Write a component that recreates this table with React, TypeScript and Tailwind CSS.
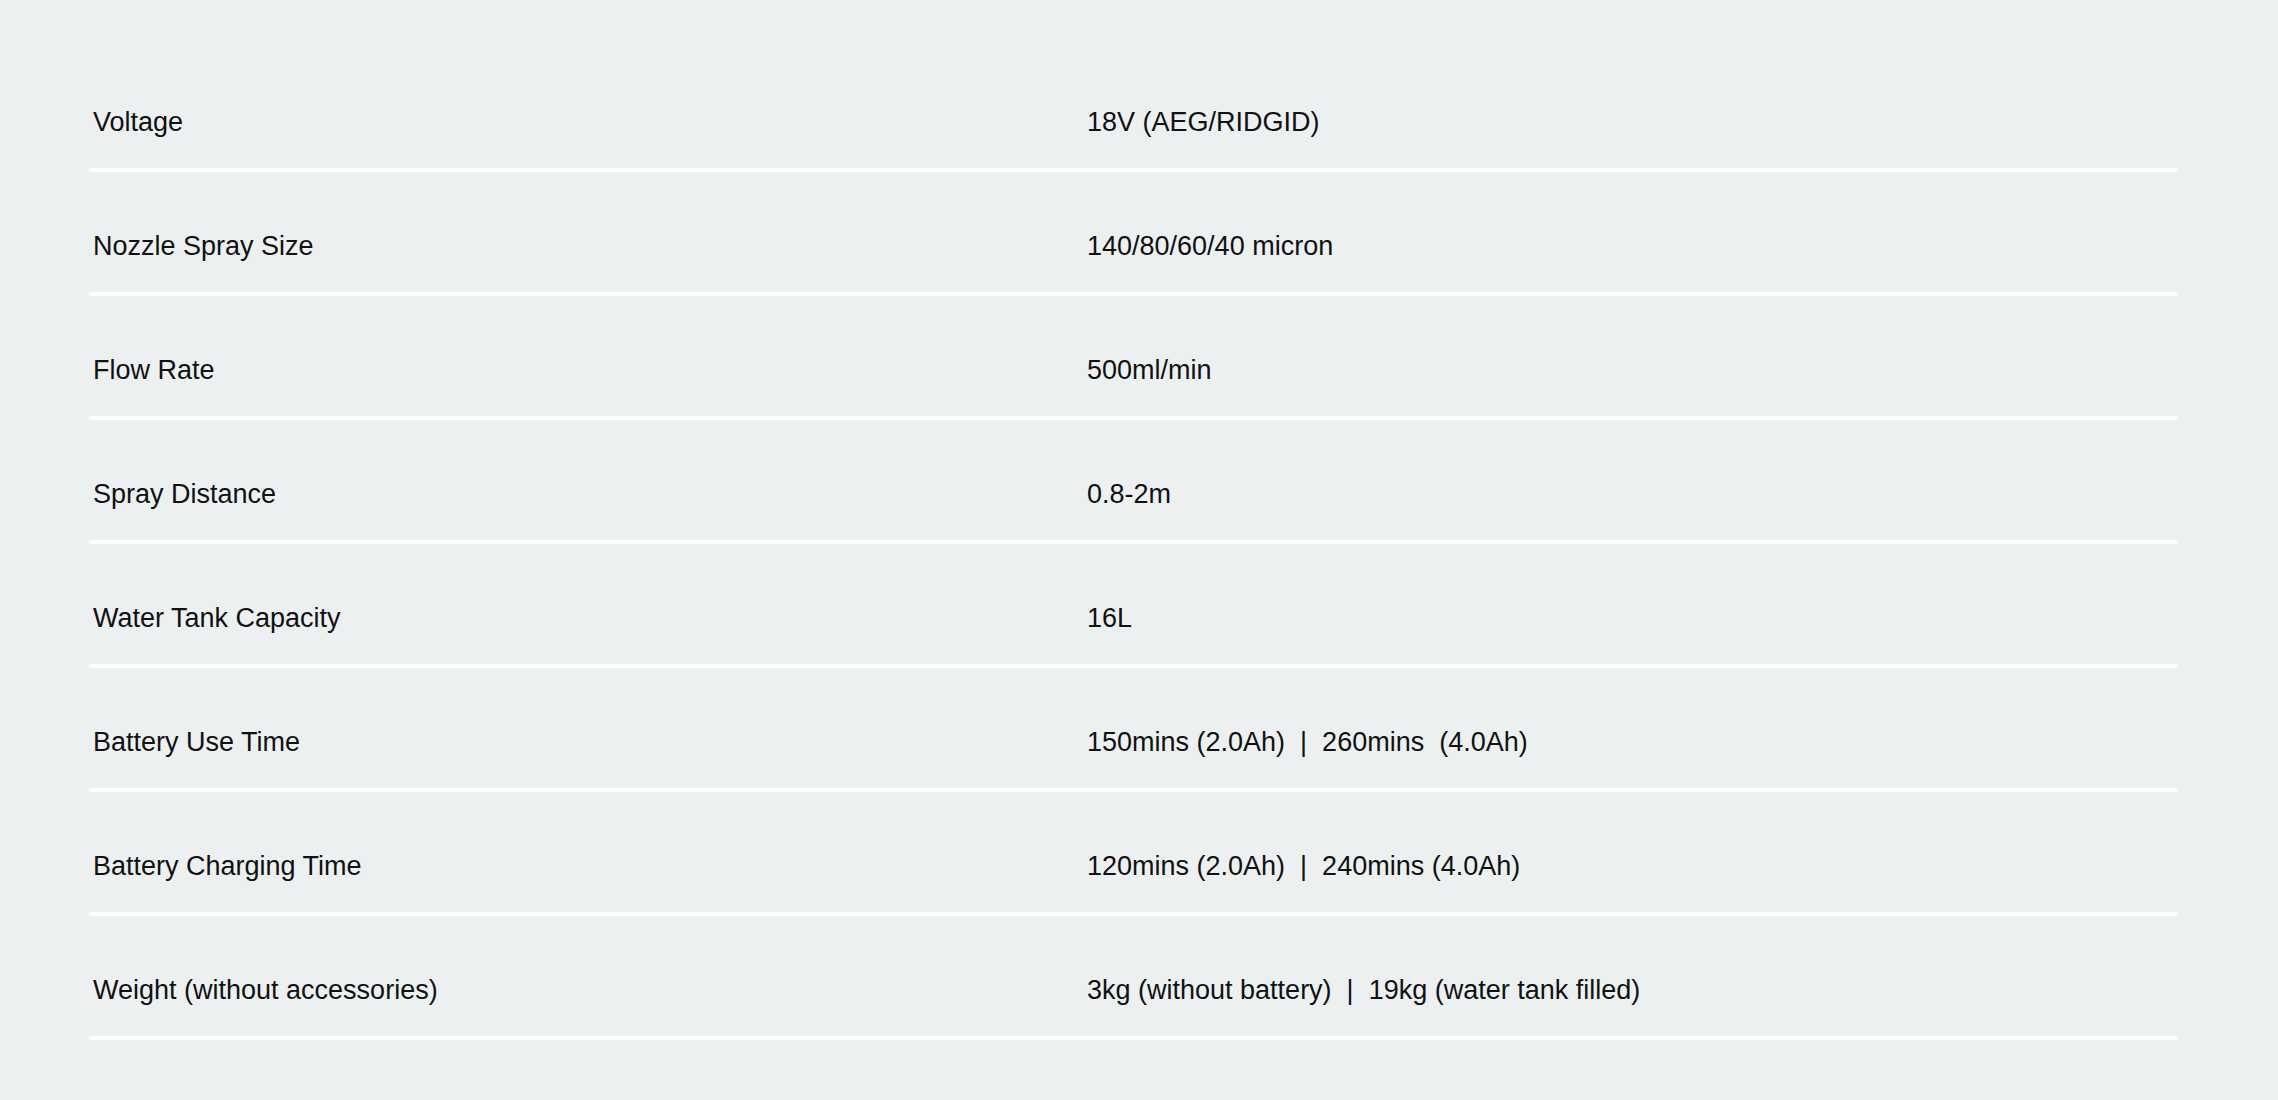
import React from "react";

const rows: [string, string][] = [
  ["Voltage", "18V (AEG/RIDGID)"],
  ["Nozzle Spray Size", "140/80/60/40 micron"],
  ["Flow Rate", "500ml/min"],
  ["Spray Distance", "0.8-2m"],
  ["Water Tank Capacity", "16L"],
  ["Battery Use Time", "150mins (2.0Ah)  |  260mins  (4.0Ah)"],
  ["Battery Charging Time", "120mins (2.0Ah)  |  240mins (4.0Ah)"],
  ["Weight (without accessories)", "3kg (without battery)  |  19kg (water tank filled)"],
];

export default function App() {
  return (
    <div
      className="min-h-[1100px] w-full bg-[#ecf0f1] pt-[48px] pl-[89px] pr-[100px] text-[#111111]"
      style={{ fontFamily: '"Liberation Sans", Arial, sans-serif' }}
    >
      {rows.map(([k, v]) => (
        <div key={k}>
          <div className="grid grid-cols-[994px_1fr] pl-[4px] pt-[54px] pb-[26px] text-[27px] leading-[40px]">
            <div className="whitespace-pre">{k}</div>
            <div className="whitespace-pre">{v}</div>
          </div>
          <div className="h-[4px] rounded-full bg-white" />
        </div>
      ))}
    </div>
  );
}
